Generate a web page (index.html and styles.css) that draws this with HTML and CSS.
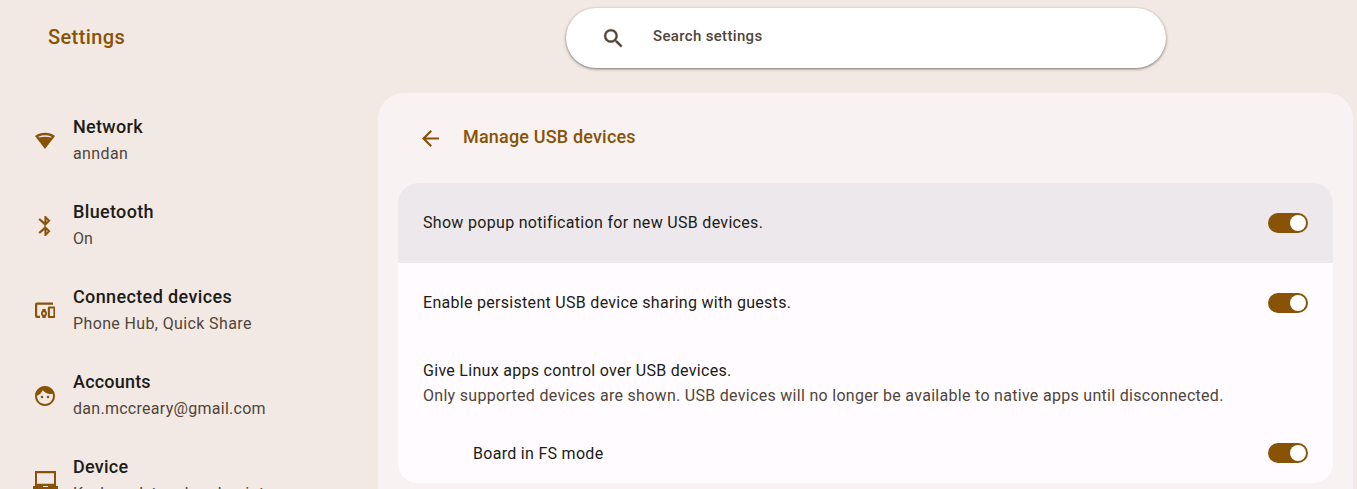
FILE: index.html
```html
<!DOCTYPE html>
<html lang="en">
<head>
<meta charset="utf-8">
<title>Settings</title>
<link rel="stylesheet" href="styles.css">
</head>
<body>
<header class="topbar">
  <h1 class="brand"><span class="t-brand">Settings</span></h1>
  <div class="search">
    <svg class="search-icon" viewBox="0 0 24 24"><path d="M15.5 14h-.79l-.28-.27A6.471 6.471 0 0 0 16 9.5 6.5 6.5 0 1 0 9.5 16c1.61 0 3.09-.59 4.23-1.57l.27.28v.79l5 4.99L20.49 19l-4.99-5zm-6 0C7.01 14 5 11.99 5 9.5S7.01 5 9.5 5 14 7.01 14 9.5 11.99 14 9.5 14z"/></svg>
    <span class="t-search">Search settings</span>
  </div>
</header>
<div class="layout">
  <nav class="menu">
    <a class="item"><svg class="icon" viewBox="0 0 20 20"><path fill-rule="evenodd" d="M0 5C5.700 .7 14.300 .7 20 5L10 18zM3.300 5.700Q10 2.900 16.700 5.700L16 6.500Q10 4.900 4 6.500z"/></svg>
      <span class="label"><b class="t-network">Network</b><span class="sub t-anndan">anndan</span></span></a>
    <a class="item"><svg class="icon bold" viewBox="0 0 20 20"><path d="M15.260 4.760 10.500 0h-.83v6.320L4.840 2.500 3.670 3.670 9.500 9v2L3.670 16.330l1.170 1.170 4.830-3.820V20h.83l4.760-4.760L10.010 10l5.250-5.240zM11.330 3.190l1.570 1.570-1.570 1.560V3.190zm1.570 12.050-1.570 1.570v-3.130l1.570 1.560z"/></svg>
      <span class="label"><b class="t-bluetooth">Bluetooth</b><span class="sub t-on">On</span></span></a>
    <a class="item"><svg class="icon" viewBox="0 0 20 20"><path fill-rule="evenodd" d="M18 1.500H2Q0 1.500 0 3.500V15Q0 17 2 17H5V14.800H2.200V3.700H18zM14 5.500H19Q20.500 5.500 20.500 7V15.500Q20.500 17 19 17H14Q12.800 17 12.800 15.500V7Q12.800 5.500 14 5.500zM14.900 7.600V14.900H18.400V7.600zM7.300 8H10.700V9.600Q12 10.700 12 12.500T10.700 15.400V17H7.300V15.400Q6 14.300 6 12.500T7.300 9.600zM9 11.200A1.300 1.300 0 1 0 9 13.800A1.300 1.300 0 1 0 9 11.200z"/></svg>
      <span class="label"><b class="t-connected">Connected devices</b><span class="sub t-phone">Phone Hub, Quick Share</span></span></a>
    <a class="item"><svg class="icon" viewBox="2 2 20 20"><path d="M10.250 13a1.250 1.250 0 1 1-2.500 0 1.250 1.250 0 0 1 2.500 0zM15 11.750a1.250 1.250 0 1 0 0 2.500 1.250 1.250 0 0 0 0-2.500zm7 .25c0 5.520-4.480 10-10 10S2 17.520 2 12 6.480 2 12 2s10 4.480 10 10zm-2 0c0-.78-.12-1.530-.33-2.240-.7.150-1.420.240-2.170.240a10 10 0 0 1-7.760-3.690A10.016 10.016 0 0 1 4 11.860c.010.040 0 .09 0 .14 0 4.410 3.590 8 8 8s8-3.590 8-8z"/></svg>
      <span class="label"><b class="t-accounts">Accounts</b><span class="sub t-mail">dan.mccreary@gmail.com</span></span></a>
    <a class="item"><svg class="icon laptop" viewBox="0 0 25 20"><path fill-rule="evenodd" d="M2 0H23V15H25V18H0V15H2zM4 2.300V12.700H21V2.300zM10 15V16H15V15z"/></svg>
      <span class="label"><b class="t-device">Device</b><span class="sub t-keyboard">Keyboard, touchpad, print</span></span></a>
  </nav>
  <main class="panel">
    <div class="heading">
      <svg class="back" viewBox="0 0 16 16"><path d="M16 7H3.830l5.590-5.590L8 0 0 8l8 8 1.410-1.410L3.830 9H16z"/></svg>
      <h2><span class="t-manage">Manage USB devices</span></h2>
    </div>
    <section class="card">
      <div class="row active"><span class="t-popup">Show popup notification for new USB devices.</span><span class="toggle"></span></div>
      <div class="row"><span class="t-persist">Enable persistent USB device sharing with guests.</span><span class="toggle"></span></div>
      <div class="info"><span class="t-give">Give Linux apps control over USB devices.</span><span class="sub t-only">Only supported devices are shown. USB devices will no longer be available to native apps until disconnected.</span></div>
      <div class="row device"><span class="t-board">Board in FS mode</span><span class="toggle"></span></div>
    </section>
  </main>
</div>
</body>
</html>
```
FILE: styles.css
```css
* { box-sizing: border-box; }
body { margin: 0; height: 489px; overflow: hidden; background: #f2e9e4; color: #201b16; font: 16px/24px Roboto, sans-serif; }
.topbar { display: flex; height: 93px; align-items: flex-start; }
h1, h2 { margin: 0; font-weight: 500; color: #885207; }
.brand { width: 566px; padding: 23px 0 0 48px; font-size: 20px; line-height: 28px; }
.search { display: flex; align-items: center; width: 600px; height: 60px; margin-top: 8px; padding-left: 35px; border-radius: 30px; background: #fff; box-shadow: 0 1px 3px rgba(60, 45, 40, .65); color: #50453a; font-weight: 500; font-size: 15px; }
.search-icon { width: 25px; height: 25px; margin-right: 27px; fill: currentColor; stroke: currentColor; stroke-width: .3; }
.search span { padding-bottom: 4px; }
.layout { display: flex; height: 396px; overflow: hidden; }
.menu { width: 378px; padding: 5px 0 0 35px; }
.item { display: flex; align-items: center; height: 85px; gap: 18px; }
.icon { width: 20px; height: 20px; fill: #885207; flex: none; }
.bold { stroke: #885207; stroke-width: .4; }
.laptop { width: 25px; margin: 0 -3px 0 -2px; }
.label { display: flex; flex-direction: column; align-items: flex-start; gap: 3px; padding-bottom: 1px; }
.label b { font-size: 18px; font-weight: 500; }
.sub { color: #50453a; }
.panel { width: 975px; height: 396px; padding: 0 20px; border-radius: 26px 26px 0 0; background: #f8f2f2; }
.heading { display: flex; align-items: center; height: 90px; padding-left: 24px; gap: 24px; }
.back { width: 17px; height: 17px; fill: #885207; }
h2 { font-size: 18px; padding-bottom: 2px; }
.card { height: 300px; border-radius: 20px; background: #fffbff; overflow: hidden; }
.row { display: flex; justify-content: space-between; align-items: center; height: 80px; padding: 0 25px; }
.active { background: #ede8ec; }
.info { display: flex; flex-direction: column; align-items: flex-start; height: 80px; padding: 16px 25px 0; gap: 1px; }
.device { height: 60px; padding-left: 75px; }
.device .t-board { padding-top: 2px; }
.toggle { width: 40px; height: 20px; padding: 2px; border-radius: 10px; background: #885207; display: flex; justify-content: flex-end; }
.toggle::after { content: ""; width: 16px; height: 16px; border-radius: 50%; background: #fff; }

/* Tracking per label */
.t-brand, .t-anndan { letter-spacing: .4px; }
.t-search, .t-bluetooth { letter-spacing: .34px; }
.t-connected, .t-phone { letter-spacing: .37px; }
.t-network { letter-spacing: .3px; }
.t-accounts { letter-spacing: .2px; }
.t-device { letter-spacing: .25px; }
.t-mail { letter-spacing: .28px; }
.t-keyboard { letter-spacing: .45px; }
.t-manage { letter-spacing: .18px; }
.t-popup { letter-spacing: .31px; }
.t-persist, .t-give, .t-only, .t-board { letter-spacing: .295px; }
```
